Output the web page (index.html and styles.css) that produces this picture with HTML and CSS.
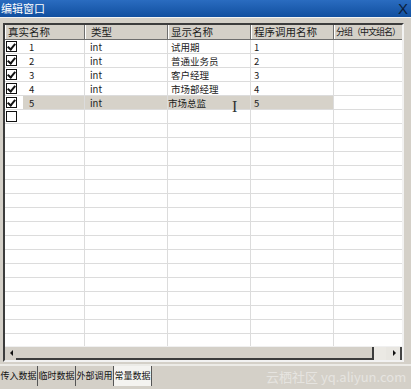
FILE: index.html
```html
<!DOCTYPE html>
<html lang="zh">

<head>
    <meta charset="utf-8">
    <meta name="viewport" content="width=device-width, initial-scale=1.0">
    <title>编辑窗口</title>
    <link rel="stylesheet" href="styles.css">
</head>

<body>
    <header class="titlebar">
        <span class="title">编辑窗口</span>
        <span class="close">X</span>
    </header>

    <div class="topline"></div>

    <section class="frame">
        <div class="grid">
            <div class="row head">
                <div class="cell c1">真实名称</div>
                <div class="cell c2">类型</div>
                <div class="cell c3">显示名称</div>
                <div class="cell c4">程序调用名称</div>
                <div class="cell c5">分组（中文组名）</div>
            </div>
            <div class="row">
                <div class="cell c1"><span class="box on"></span><span class="num">1</span></div>
                <div class="cell c2">int</div>
                <div class="cell c3">试用期</div>
                <div class="cell c4">1</div>
                <div class="cell c5"></div>
            </div>
            <div class="row">
                <div class="cell c1"><span class="box on"></span><span class="num">2</span></div>
                <div class="cell c2">int</div>
                <div class="cell c3">普通业务员</div>
                <div class="cell c4">2</div>
                <div class="cell c5"></div>
            </div>
            <div class="row">
                <div class="cell c1"><span class="box on"></span><span class="num">3</span></div>
                <div class="cell c2">int</div>
                <div class="cell c3">客户经理</div>
                <div class="cell c4">3</div>
                <div class="cell c5"></div>
            </div>
            <div class="row">
                <div class="cell c1"><span class="box on"></span><span class="num">4</span></div>
                <div class="cell c2">int</div>
                <div class="cell c3">市场部经理</div>
                <div class="cell c4">4</div>
                <div class="cell c5"></div>
            </div>
            <div class="row valgt">
                <div class="cell c1"><span class="box on"></span><span class="num">5</span></div>
                <div class="cell c2">int</div>
                <div class="cell c3 edit">市场总监<span class="ibeam">I</span></div>
                <div class="cell c4">5</div>
                <div class="cell c5"></div>
            </div>
            <div class="row">
                <div class="cell c1"><span class="box"></span></div>
                <div class="cell c2"></div>
                <div class="cell c3"></div>
                <div class="cell c4"></div>
                <div class="cell c5"></div>
            </div>
            <div class="row"><div class="cell c1"></div><div class="cell c2"></div><div class="cell c3"></div><div class="cell c4"></div><div class="cell c5"></div></div>
            <div class="row"><div class="cell c1"></div><div class="cell c2"></div><div class="cell c3"></div><div class="cell c4"></div><div class="cell c5"></div></div>
            <div class="row"><div class="cell c1"></div><div class="cell c2"></div><div class="cell c3"></div><div class="cell c4"></div><div class="cell c5"></div></div>
            <div class="row"><div class="cell c1"></div><div class="cell c2"></div><div class="cell c3"></div><div class="cell c4"></div><div class="cell c5"></div></div>
            <div class="row"><div class="cell c1"></div><div class="cell c2"></div><div class="cell c3"></div><div class="cell c4"></div><div class="cell c5"></div></div>
            <div class="row"><div class="cell c1"></div><div class="cell c2"></div><div class="cell c3"></div><div class="cell c4"></div><div class="cell c5"></div></div>
            <div class="row"><div class="cell c1"></div><div class="cell c2"></div><div class="cell c3"></div><div class="cell c4"></div><div class="cell c5"></div></div>
            <div class="row"><div class="cell c1"></div><div class="cell c2"></div><div class="cell c3"></div><div class="cell c4"></div><div class="cell c5"></div></div>
            <div class="row"><div class="cell c1"></div><div class="cell c2"></div><div class="cell c3"></div><div class="cell c4"></div><div class="cell c5"></div></div>
            <div class="row"><div class="cell c1"></div><div class="cell c2"></div><div class="cell c3"></div><div class="cell c4"></div><div class="cell c5"></div></div>
            <div class="row"><div class="cell c1"></div><div class="cell c2"></div><div class="cell c3"></div><div class="cell c4"></div><div class="cell c5"></div></div>
            <div class="row"><div class="cell c1"></div><div class="cell c2"></div><div class="cell c3"></div><div class="cell c4"></div><div class="cell c5"></div></div>
            <div class="row"><div class="cell c1"></div><div class="cell c2"></div><div class="cell c3"></div><div class="cell c4"></div><div class="cell c5"></div></div>
            <div class="row"><div class="cell c1"></div><div class="cell c2"></div><div class="cell c3"></div><div class="cell c4"></div><div class="cell c5"></div></div>
            <div class="row"><div class="cell c1"></div><div class="cell c2"></div><div class="cell c3"></div><div class="cell c4"></div><div class="cell c5"></div></div>
            <div class="row"><div class="cell c1"></div><div class="cell c2"></div><div class="cell c3"></div><div class="cell c4"></div><div class="cell c5"></div></div>
            <div class="row"><div class="cell c1"></div><div class="cell c2"></div><div class="cell c3"></div><div class="cell c4"></div><div class="cell c5"></div></div>
        </div>

        <div class="scrollbar">
            <span class="arrow left"></span>
            <span class="thumb"></span>
            <span class="arrow right"></span>
        </div>
    </section>

    <footer class="tabs">
        <button class="tab">传入数据</button>
        <button class="tab">临时数据</button>
        <button class="tab">外部调用</button>
        <button class="tab valgt">常量数据</button>
        <span class="mark">云栖社区 yq.aliyun.com</span>
    </footer>
</body>

</html>
```

FILE: styles.css
```css
body {
    margin: 0;
    width: 411px;
    height: 389px;
    overflow: hidden;
    background-color: #d4d0c8;
    font-family: "Noto Sans CJK SC", "DejaVu Sans", sans-serif;
    font-size: 9.5px;
    color: #1a1a1a;
}

.titlebar {
    height: 17px;
    display: flex;
    align-items: center;
    justify-content: space-between;
    background: linear-gradient(#2a6cc0, #114f9f);
    color: #fff;
    padding: 0 3px 0 1px;
}

.title {
    font-size: 11px;
    line-height: 17px;
}

.close {
    color: #0b1d3a;
    font-family: "Liberation Sans", sans-serif;
    font-size: 15px;
    line-height: 17px;
}

.topline {
    height: 6px;
    border-top: 1px solid #f4f4f2;
    box-sizing: border-box;
}

.frame {
    margin: 0 7px 0 3px;
    border: 2px solid;
    border-color: #3c3c3c #f2f2f2 #f2f2f2 #3c3c3c;
    background-color: #fff;
}

.grid {
    height: 321px;
    overflow: hidden;
}

.row {
    display: flex;
    height: 14px;
    box-sizing: border-box;
    border-bottom: 1px solid #dcdcdc;
}

.cell {
    flex: none;
    box-sizing: border-box;
    border-right: 1px solid #dcdcdc;
    padding-left: 3px;
    line-height: 12px;
    white-space: nowrap;
    overflow: hidden;
    display: flex;
    align-items: center;
}

.c1 { width: 80px; padding-left: 0; }
.c2 { width: 83px; padding-left: 5px; }
.c3 { width: 83px; }
.c4 { width: 83px; }
.c5 { width: 70px; border-right: none; }

.head {
    height: 15px;
    border-bottom: 1px solid #6e6e6e;
}

.head .cell {
    background-color: #d4d0c8;
    border-right: 1px solid #6e6e6e;
    border-left: 1px solid #fff;
    padding-left: 2px;
    font-size: 10.5px;
}

.head .c2 { padding-left: 5px; }

.head .c5 {
    border-right: none;
    font-size: 9px;
    letter-spacing: -1px;
    padding-left: 1px;
}

.box {
    width: 9px;
    height: 9px;
    border: 1px solid #111;
    margin-left: 1px;
    background-color: #fff;
    position: relative;
    flex: none;
}

.box.on::after {
    content: "";
    position: absolute;
    left: 2px;
    top: 0;
    width: 3px;
    height: 6px;
    border: solid #111;
    border-width: 0 2px 2px 0;
    transform: rotate(40deg);
}

.num {
    margin-left: 12px;
}

.row.valgt .cell {
    background-color: #d6d2c9;
}

.row.valgt .c1 {
    background: linear-gradient(to right, #fff 18px, #d6d2c9 18px);
}

.row.valgt .c5 {
    background-color: #fff;
}

.edit {
    padding-left: 0;
    position: relative;
    overflow: visible;
}

.ibeam {
    position: absolute;
    left: 64px;
    top: 3px;
    font-family: "Liberation Serif", serif;
    font-size: 16px;
    line-height: 16px;
    color: #333;
}

.scrollbar {
    height: 13px;
    display: flex;
    background-color: #ebe9e4;
    border-top: 1px solid #f0f0f0;
}

.arrow {
    width: 11px;
    position: relative;
    background-color: #d4d0c8;
}

.arrow.left::after,
.arrow.right::after {
    content: "";
    position: absolute;
    top: 3px;
    border: 3px solid transparent;
}

.arrow.left::after {
    left: 2px;
    border-right: 3px solid #111;
}

.arrow.right {
    width: 16px;
    margin-left: auto;
    background-color: #e8e6e1;
    border-right: 2px solid #444;
    box-sizing: border-box;
}

.arrow.right::after {
    left: 7px;
    border-left: 3px solid #111;
}

.thumb {
    width: 358px;
    background-color: #d4d0c8;
    border-right: 2px solid #3c3c3c;
    border-bottom: 2px solid #3c3c3c;
    box-sizing: border-box;
}

.tabs {
    margin-top: 2px;
    border-top: 2px solid #ecebe7;
    display: flex;
    align-items: flex-start;
    height: 27px;
    position: relative;
}

.tab {
    font-family: "Noto Sans CJK SC", sans-serif;
    font-size: 9px;
    line-height: 20px;
    width: 38px;
    padding: 0;
    margin: 0;
    border: none;
    border-right: 1px solid #555;
    background-color: transparent;
    color: #111;
    white-space: nowrap;
}

.tab.valgt {
    background-color: #f4f3f0;
}

.mark {
    position: absolute;
    left: 266px;
    top: 1px;
    font-size: 13px;
    color: #e6e4e0;
    font-family: "Noto Sans CJK SC", sans-serif;
}
```
